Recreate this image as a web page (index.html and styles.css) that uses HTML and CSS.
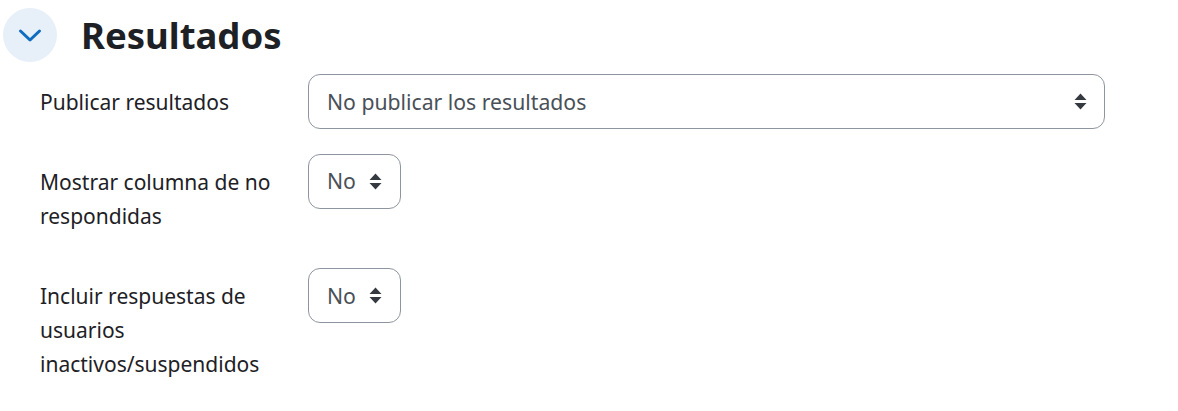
FILE: index.html
```html
<!DOCTYPE html>
<html lang="es">
<head>
<meta charset="UTF-8" />
<title>Resultados</title>
<link rel="stylesheet" href="styles.css">
</head>
<body>

  <!-- Section header -->
  <div class="section-head">
    <span class="collapse-btn">
      <svg width="24" height="15" viewBox="0 0 24 15"><path d="M2.5 3 L12 12 L21.5 3" fill="none" stroke="#0f6cbf" stroke-width="3" stroke-linecap="round" stroke-linejoin="round"/></svg>
    </span>
    <h2>Resultados</h2>
  </div>

  <!-- Form rows -->
  <div class="form-row form-row-first">
    <label class="form-label">Publicar resultados</label>
    <div class="select select-wide">
      <span>No publicar los resultados</span>
      <svg class="arrows" width="13" height="17" viewBox="0 0 13 17"><path d="M6.5 0.5 L12.5 7 H0.5 Z M0.5 10 H12.5 L6.5 16.5 Z" fill="#343a40"/></svg>
    </div>
  </div>

  <div class="form-row">
    <label class="form-label">Mostrar columna de no respondidas</label>
    <div class="select select-small">
      <span>No</span>
      <svg class="arrows" width="13" height="17" viewBox="0 0 13 17"><path d="M6.5 0.5 L12.5 7 H0.5 Z M0.5 10 H12.5 L6.5 16.5 Z" fill="#343a40"/></svg>
    </div>
  </div>

  <div class="form-row">
    <label class="form-label">Incluir respuestas de usuarios inactivos/suspendidos</label>
    <div class="select select-small">
      <span>No</span>
      <svg class="arrows" width="13" height="17" viewBox="0 0 13 17"><path d="M6.5 0.5 L12.5 7 H0.5 Z M0.5 10 H12.5 L6.5 16.5 Z" fill="#343a40"/></svg>
    </div>
  </div>

</body>
</html>
```

FILE: styles.css
```css
body {
  font-family: "Noto Sans", "Open Sans", sans-serif;
  font-size: 21px;
  line-height: 33.75px;
  color: #1d2125;
  background: #ffffff;
  margin: 0;
  padding: 8px 0 0 3px;
}

.section-head {
  display: flex;
  align-items: flex-start;
  gap: 24px;
  margin-bottom: 11px;
}

.section-head h2 {
  margin: 0;
  font-size: 36.5px;
  line-height: 55px;
  font-weight: 700;
}

.collapse-btn {
  width: 54px;
  height: 54px;
  border-radius: 50%;
  background: #e7eff8;
  display: flex;
  align-items: center;
  justify-content: center;
}

.form-row {
  display: flex;
  align-items: flex-start;
  margin-bottom: 25px;
}

.form-row-first {
  margin-bottom: 24px;
}

.form-label {
  width: 268px;
  margin-left: 37px;
  padding: 12px 0 10px;
}

.select {
  height: 55px;
  box-sizing: border-box;
  border: 1px solid #8f959e;
  border-radius: 12px;
  padding: 0 17px 0 18px;
  font-size: 21.2px;
  color: #495057;
  display: flex;
  align-items: center;
  gap: 13px;
}

.select-small {
  width: 93px;
}

.select-wide {
  width: 797px;
  justify-content: space-between;
}
```
